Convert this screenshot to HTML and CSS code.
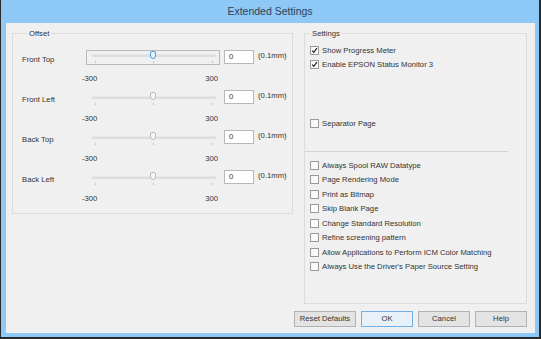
FILE: index.html
```html
<!DOCTYPE html>
<html>
<head>
<meta charset="utf-8">
<title>Extended Settings</title>
<link rel="stylesheet" href="styles.css">
</head>
<body>
<div class="window">
  <div class="titlebar">Extended Settings</div>
  <div class="client">
    <div class="panels">
      <div class="group offset">
        <div class="group-title">Offset</div>

        <div class="offset-row first">
          <span class="row-label">Front Top</span>
          <div class="slider focused">
            <span class="track"></span>
            <span class="tick t1"></span><span class="tick t2"></span><span class="tick t3"></span>
            <span class="thumb"></span>
          </div>
          <span class="num">0</span>
          <span class="unit">(0.1mm)</span>
          <div class="scale"><span>-300</span><span>300</span></div>
        </div>

        <div class="offset-row">
          <span class="row-label">Front Left</span>
          <div class="slider">
            <span class="track"></span>
            <span class="tick t1"></span><span class="tick t2"></span><span class="tick t3"></span>
            <span class="thumb"></span>
          </div>
          <span class="num">0</span>
          <span class="unit">(0.1mm)</span>
          <div class="scale"><span>-300</span><span>300</span></div>
        </div>

        <div class="offset-row">
          <span class="row-label">Back Top</span>
          <div class="slider">
            <span class="track"></span>
            <span class="tick t1"></span><span class="tick t2"></span><span class="tick t3"></span>
            <span class="thumb"></span>
          </div>
          <span class="num">0</span>
          <span class="unit">(0.1mm)</span>
          <div class="scale"><span>-300</span><span>300</span></div>
        </div>

        <div class="offset-row">
          <span class="row-label">Back Left</span>
          <div class="slider">
            <span class="track"></span>
            <span class="tick t1"></span><span class="tick t2"></span><span class="tick t3"></span>
            <span class="thumb"></span>
          </div>
          <span class="num">0</span>
          <span class="unit">(0.1mm)</span>
          <div class="scale"><span>-300</span><span>300</span></div>
        </div>
      </div>

      <div class="group settings">
        <div class="group-title">Settings</div>
        <div class="check"><span class="box on"><svg viewBox="0 0 9 9"><path d="M1.6 4.6 L3.6 6.8 L7.6 1.6" fill="none" stroke="#222" stroke-width="1.6"/></svg></span>Show Progress Meter</div>
        <div class="check"><span class="box on"><svg viewBox="0 0 9 9"><path d="M1.6 4.6 L3.6 6.8 L7.6 1.6" fill="none" stroke="#222" stroke-width="1.6"/></svg></span>Enable EPSON Status Monitor 3</div>
        <div class="check sep-page"><span class="box"></span>Separator Page</div>
        <div class="divider"></div>
        <div class="list">
          <div class="check"><span class="box"></span>Always Spool RAW Datatype</div>
          <div class="check"><span class="box"></span>Page Rendering Mode</div>
          <div class="check"><span class="box"></span>Print as Bitmap</div>
          <div class="check"><span class="box"></span>Skip Blank Page</div>
          <div class="check"><span class="box"></span>Change Standard Resolution</div>
          <div class="check"><span class="box"></span>Refine screening pattern</div>
          <div class="check"><span class="box"></span>Allow Applications to Perform ICM Color Matching</div>
          <div class="check"><span class="box"></span>Always Use the Driver's Paper Source Setting</div>
        </div>
      </div>
    </div>

    <div class="buttons">
      <span class="btn wide">Reset Defaults</span>
      <span class="btn default">OK</span>
      <span class="btn">Cancel</span>
      <span class="btn">Help</span>
    </div>
  </div>
</div>
</body>
</html>
```

FILE: styles.css
```css
html, body {
  margin: 0;
  padding: 0;
  background: #8dc8f6;
}

.window {
  width: 541px;
  height: 339px;
  box-sizing: border-box;
  background: #8dc8f6;
  border-left: 1px solid #2a2a2a;
  border-right: 2px solid #2a2a2a;
  border-bottom: 2px solid #2a2a2a;
  display: flex;
  flex-direction: column;
  font-family: "Liberation Sans", Arial, sans-serif;
  font-size: 7.7px;
  color: #333;
}

.titlebar {
  height: 23px;
  line-height: 23px;
  text-align: center;
  font-size: 10.5px;
  color: #2f4157;
}

.client {
  flex: 1;
  margin: 0 4px 4px 5px;
  background: #f0f0f0;
  padding: 10px 8px 0 6px;
}

.panels {
  display: flex;
  align-items: flex-start;
  gap: 11px;
}

.group {
  border: 1px solid #dcdcdc;
  box-sizing: border-box;
}

.group-title {
  display: table;
  margin: -6px 0 0 5px;
  padding: 0 2px;
  line-height: 11px;
  background: #f0f0f0;
  color: #333;
}

/* offset panel */
.offset {
  width: 281px;
  height: 181px;
  padding-left: 9px;
}

.offset-row {
  display: grid;
  grid-template-columns: 60px 134px 30px auto;
  grid-template-rows: 16px 11px;
  column-gap: 4px;
  row-gap: 7px;
  align-items: center;
  margin-bottom: 6px;
}

.offset-row.first {
  margin-top: 11px;
}

.row-label {
  padding-top: 2px;
}

.slider {
  position: relative;
  height: 16px;
  box-sizing: border-box;
  border: 1px solid transparent;
}

.slider.focused {
  border-color: #b9b9b9;
  height: 15px;
  align-self: start;
}

.track {
  position: absolute;
  left: 5px;
  right: 3px;
  top: 5px;
  height: 2px;
  background: #dedede;
  border-top: 1px solid #e6e6e6;
}

.thumb {
  position: absolute;
  left: 63px;
  top: 1px;
  width: 4px;
  height: 6px;
  border: 1px solid #bdbdbd;
  border-radius: 2px 2px 3px 3px;
  background: #f6f6f6;
}

.focused .track { top: 3px; }
.focused .thumb {
  top: 0;
  border-color: #4a9ae0;
  background: #e8f3fc;
}

.tick {
  position: absolute;
  top: 12px;
  width: 1px;
  height: 2px;
  background: #c4c4c4;
}

.focused .tick { top: 10px; }

.t1 { left: 8px; }
.t2 { left: 66px; }
.t3 { left: 125px; }

.num {
  height: 14px;
  box-sizing: border-box;
  border: 1px solid #b8b8b8;
  background: #fff;
  padding-left: 4px;
  line-height: 12px;
  align-self: start;
}

.unit {
  align-self: start;
  line-height: 12px;
}

.scale {
  grid-column: 2;
  grid-row: 2;
  display: flex;
  justify-content: space-between;
  margin: 0 2px 0 -4px;
}

/* settings panel */
.settings {
  width: 223px;
  height: 271px;
}

.settings .group-title {
  margin-bottom: 4px;
}

.check {
  display: flex;
  align-items: center;
  height: 14px;
  margin-left: 5px;
  white-space: nowrap;
}

.list .check {
  height: 14.5px;
}

.box {
  width: 9px;
  height: 9px;
  box-sizing: border-box;
  border: 1px solid #9a9a9a;
  background: #f9f9f9;
  margin-right: 3px;
  flex: none;
  display: flex;
}

.box svg {
  width: 7px;
  height: 7px;
}

.sep-page {
  margin-top: 45px;
}

.divider {
  height: 0;
  border-top: 1px solid #d4d4d4;
  margin: 21px 18px 6px 0;
}

/* buttons */
.buttons {
  display: flex;
  justify-content: flex-end;
  gap: 5px;
  margin-top: 7px;
}

.btn {
  width: 52px;
  height: 16px;
  box-sizing: border-box;
  border: 1px solid #b2b2b2;
  background: #e3e3e3;
  text-align: center;
  line-height: 14px;
  color: #333;
}

.btn.wide {
  width: 62px;
}

.btn.default {
  border-color: #6fb0e8;
  background: #e8f1fa;
}
```
